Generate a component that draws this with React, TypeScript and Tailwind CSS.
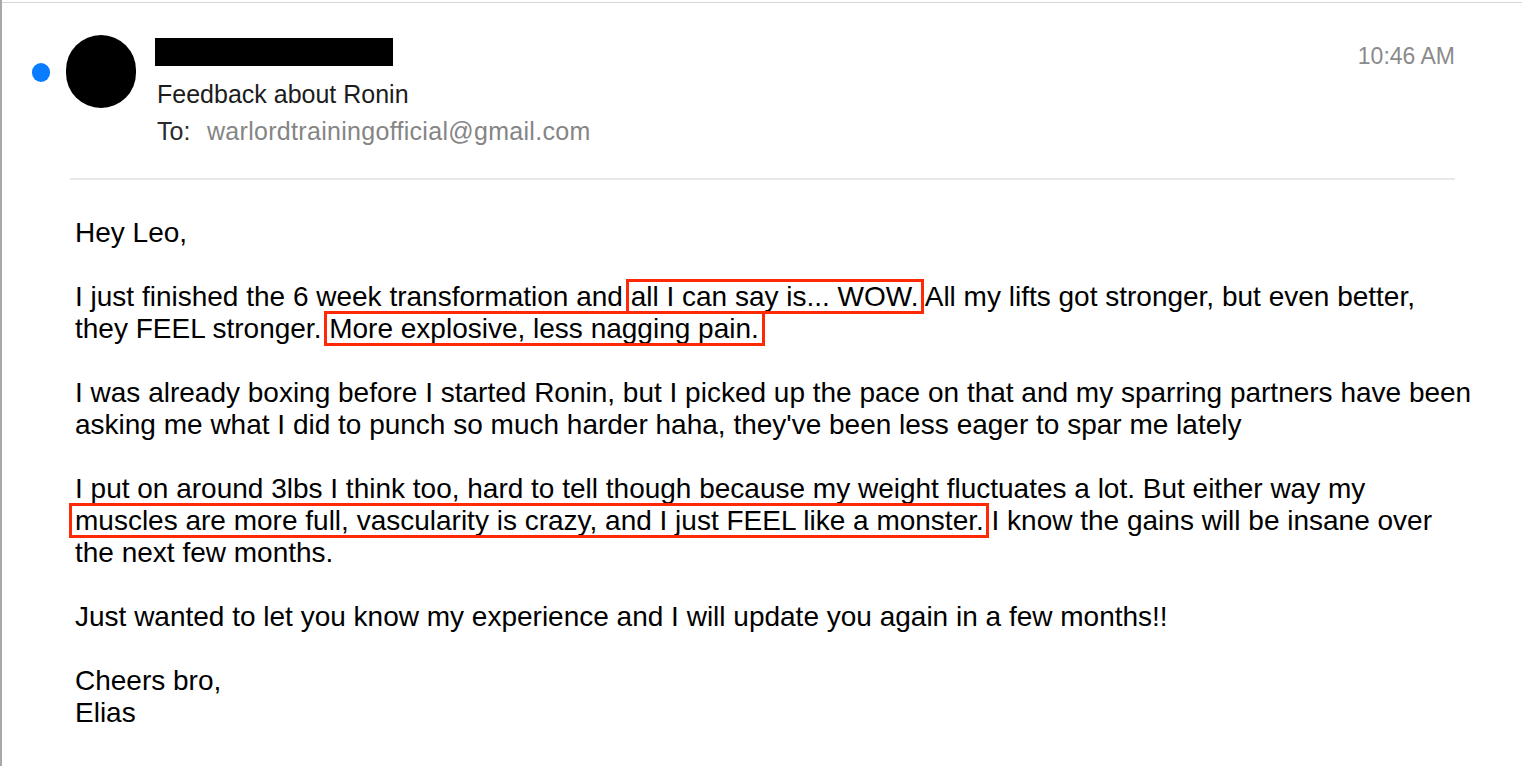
import React from "react";

function Mark({ children, l = 5, r = 6 }: { children: React.ReactNode; l?: number; r?: number }) {
  return (
    <span className="relative">
      {children}
      <span
        className="absolute top-[-2px] bottom-[-2px] border-[3px] border-[#ff2a05] pointer-events-none"
        style={{ left: -l, right: -r }}
      />
    </span>
  );
}

export default function App() {
  return (
    <div
      className="w-[1522px] h-[766px] bg-white border-l-2 border-[#a8a8a8] flex flex-col overflow-hidden"
      style={{ fontFamily: '"Liberation Sans", Arial, sans-serif' }}
    >
      <div className="pt-[2px]">
        <div className="h-px bg-[#d6d6d6]" />
      </div>
      {/* header */}
      <div className="flex items-start pt-[32px]">
        <div className="ml-[30px] mt-[28px] w-[18px] h-[19px] rounded-full bg-[#0a7cff] shrink-0" />
        <div className="ml-[16px] w-[70px] h-[73px] rounded-full bg-black shrink-0" />
        <div className="ml-[19px] flex flex-col">
          <div className="mt-[3px] w-[238px] h-[28px] bg-black" />
          <div className="mt-[10px] text-[25px] leading-[37px] text-[#1c1c1c] pl-[2px]">Feedback about Ronin</div>
          <div className="flex text-[25px] leading-[37px] pl-[2px]">
            <span className="w-[50px] text-[#2a2a2a]">To:</span>
            <span className="text-[#858585] tracking-[0.3px]">warlordtrainingofficial@gmail.com</span>
          </div>
        </div>
        <div className="ml-auto mr-[67px] mt-[6px] text-[23px] leading-[30px] text-[#8b8b8b]">10:46 AM</div>
      </div>
      <div className="ml-[68px] mr-[67px] mt-[28px] h-[2px] bg-[#e8e8e8]" />
      {/* body */}
      <div className="ml-[73px] mt-[37px] text-[28px] leading-[32px] text-black whitespace-nowrap">
        <p className="mb-[32px]">Hey Leo,</p>
        <p className="mb-[32px]">
          I just finished the 6 week transformation and <Mark>all I can say is... WOW.</Mark> All my lifts got stronger, but even better,
          <br />
          they FEEL stronger. <Mark>More explosive, less nagging pain.</Mark>
        </p>
        <p className="mb-[32px]">
          I was already boxing before I started Ronin, but I picked up the pace on that and my sparring partners have been
          <br />
          asking me what I did to punch so much harder haha, they've been less eager to spar me lately
        </p>
        <p className="mb-[32px]">
          I put on around 3lbs I think too, hard to tell though because my weight fluctuates a lot. But either way my
          <br />
          <Mark l={6} r={5}>muscles are more full, vascularity is crazy, and I just FEEL like a monster.</Mark> I know the gains will be insane over
          <br />
          the next few months.
        </p>
        <p className="mb-[32px]">Just wanted to let you know my experience and I will update you again in a few months!!</p>
        <p>
          Cheers bro,
          <br />
          Elias
        </p>
      </div>
    </div>
  );
}
